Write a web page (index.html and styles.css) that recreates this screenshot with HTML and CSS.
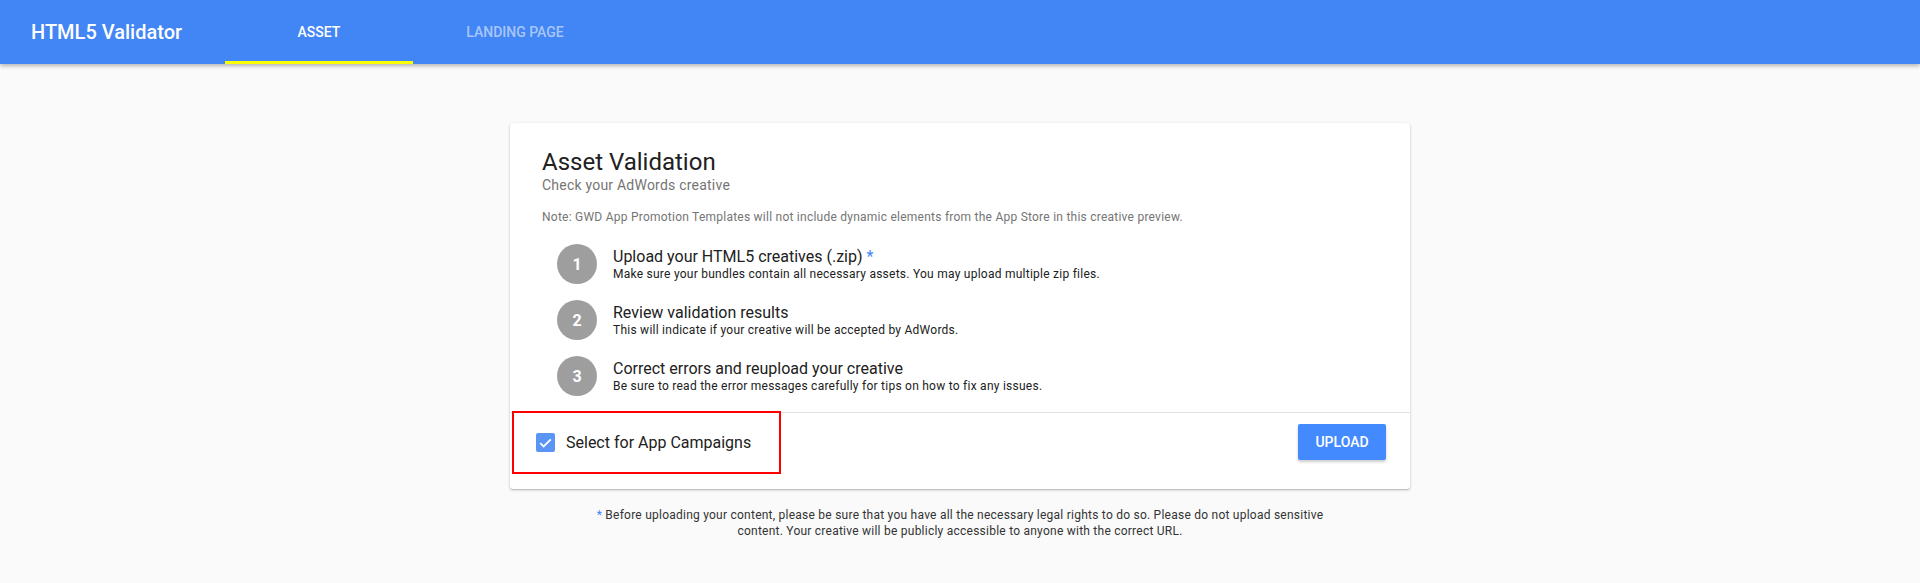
FILE: index.html
```html
<!DOCTYPE html>
<html lang="en">
<head>
<meta charset="utf-8">
<title>HTML5 Validator</title>
<link rel="stylesheet" href="styles.css">
</head>
<body>
<header class="topbar">
  <div class="brand">HTML5 Validator</div>
  <nav class="tabs">
    <a class="tab tab-asset active">Asset</a>
    <a class="tab tab-landing">Landing Page</a>
  </nav>
</header>
<main class="main">
  <section class="card">
    <div class="card-body">
      <h1 class="title">Asset Validation</h1>
      <div class="subtitle">Check your AdWords creative</div>
      <p class="note">Note: GWD App Promotion Templates will not include dynamic elements from the App Store in this creative preview.</p>
      <ol class="steps">
        <li class="step">
          <span class="num">1</span>
          <div class="step-text">
            <div class="step-title">Upload your HTML5 creatives (.zip) <span class="star">*</span></div>
            <div class="step-desc">Make sure your bundles contain all necessary assets. You may upload multiple zip files.</div>
          </div>
        </li>
        <li class="step">
          <span class="num">2</span>
          <div class="step-text">
            <div class="step-title">Review validation results</div>
            <div class="step-desc">This will indicate if your creative will be accepted by AdWords.</div>
          </div>
        </li>
        <li class="step">
          <span class="num">3</span>
          <div class="step-text">
            <div class="step-title">Correct errors and reupload your creative</div>
            <div class="step-desc">Be sure to read the error messages carefully for tips on how to fix any issues.</div>
          </div>
        </li>
      </ol>
    </div>
    <div class="actions">
      <label class="highlight">
        <span class="checkbox">
          <svg width="13" height="10" viewBox="0 0 13 10"><path d="M1.2 5.2 L4.6 8.4 L11.8 1.4" fill="none" stroke="#ffffff" stroke-width="1.8"/></svg>
        </span>
        <span class="check-label">Select for App Campaigns</span>
      </label>
      <button class="upload">Upload</button>
    </div>
  </section>
  <p class="legal"><span class="star">*</span> Before uploading your content, please be sure that you have all the necessary legal rights to do so. Please do not upload sensitive content. Your creative will be publicly accessible to anyone with the correct URL.</p>
</main>
</body>
</html>
```

FILE: styles.css
```css
* { box-sizing: border-box; }
html, body { margin: 0; padding: 0; }
body {
  background: #fafafa;
  font-family: Roboto, "Noto Sans", Arial, sans-serif;
  color: #212121;
  height: 583px;
  overflow: hidden;
}
.topbar {
  height: 64px;
  background: #4285f4;
  display: flex;
  align-items: stretch;
  box-shadow: 0 2px 4px rgba(0,0,0,0.28);
  position: relative;
  z-index: 1;
}
.brand {
  flex: 0 0 225px;
  padding-left: 31px;
  display: flex;
  align-items: center;
  color: #ffffff;
  font-size: 20px;
  font-weight: 500;
}
.tabs { display: flex; align-items: stretch; }
.tab {
  display: flex;
  align-items: center;
  justify-content: center;
  font-size: 14px;
  font-weight: 500;
  text-transform: uppercase;
  color: rgba(255,255,255,0.55);
  border-bottom: 3px solid transparent;
  padding-top: 3px;
}
.tab-asset { width: 188px; }
.tab-landing { width: 204px; }
.tab.active { color: #ffffff; border-bottom-color: #ffff00; }
.main { padding-top: 59px; }
.card {
  width: 900px;
  margin: 0 auto;
  background: #ffffff;
  border-radius: 3px;
  box-shadow: 0 1px 3px rgba(0,0,0,0.22), 0 1px 1px rgba(0,0,0,0.1);
}
.card-body {
  padding: 24px 32px 16px;
  border-bottom: 1px solid #e0e0e0;
}
.title {
  margin: 0;
  font-size: 24px;
  line-height: 30px;
  font-weight: 400;
  color: #212121;
}
.subtitle {
  font-size: 14px;
  line-height: 16px;
  color: #757575;
  letter-spacing: 0.22px;
}
.note {
  margin: 16px 0 0;
  font-size: 12px;
  line-height: 16px;
  color: #757575;
  letter-spacing: 0.24px;
}
.steps {
  list-style: none;
  margin: 19px 0 0;
  padding: 0 0 0 15px;
  display: flex;
  flex-direction: column;
  gap: 16px;
}
.step { display: flex; align-items: center; gap: 16px; }
.num {
  flex: 0 0 40px;
  height: 40px;
  border-radius: 50%;
  background: #9e9e9e;
  color: #ffffff;
  font-size: 16px;
  font-weight: 700;
  display: flex;
  align-items: center;
  justify-content: center;
}
.step-title { font-size: 16px; line-height: 20px; color: #212121; }
.step-desc { font-size: 12px; line-height: 14px; color: #212121; letter-spacing: 0.25px; }
.star { color: #4285f4; }
.actions {
  height: 76px;
  display: flex;
  align-items: flex-start;
  justify-content: space-between;
  padding: 0 24px 0 2px;
}
.highlight {
  margin-top: -2px;
  width: 269px;
  height: 63px;
  border: 2px solid #ff0000;
  display: flex;
  align-items: center;
  padding-left: 22px;
  gap: 11px;
}
.checkbox {
  width: 19px;
  height: 19px;
  border-radius: 2px;
  background: #5a95f5;
  display: flex;
  align-items: center;
  justify-content: center;
}
.check-label { font-size: 16px; color: #212121; }
.upload {
  margin-top: 11px;
  width: 88px;
  height: 36px;
  border: 0;
  border-radius: 2px;
  background: #448aff;
  color: #ffffff;
  font-family: Roboto, "Noto Sans", Arial, sans-serif;
  font-size: 14px;
  font-weight: 500;
  text-transform: uppercase;
  box-shadow: 0 2px 3px rgba(0,0,0,0.2);
}
.legal {
  width: 760px;
  margin: 18px auto 0;
  text-align: center;
  font-size: 12px;
  line-height: 16px;
  color: #333333;
  letter-spacing: 0.24px;
}
```
